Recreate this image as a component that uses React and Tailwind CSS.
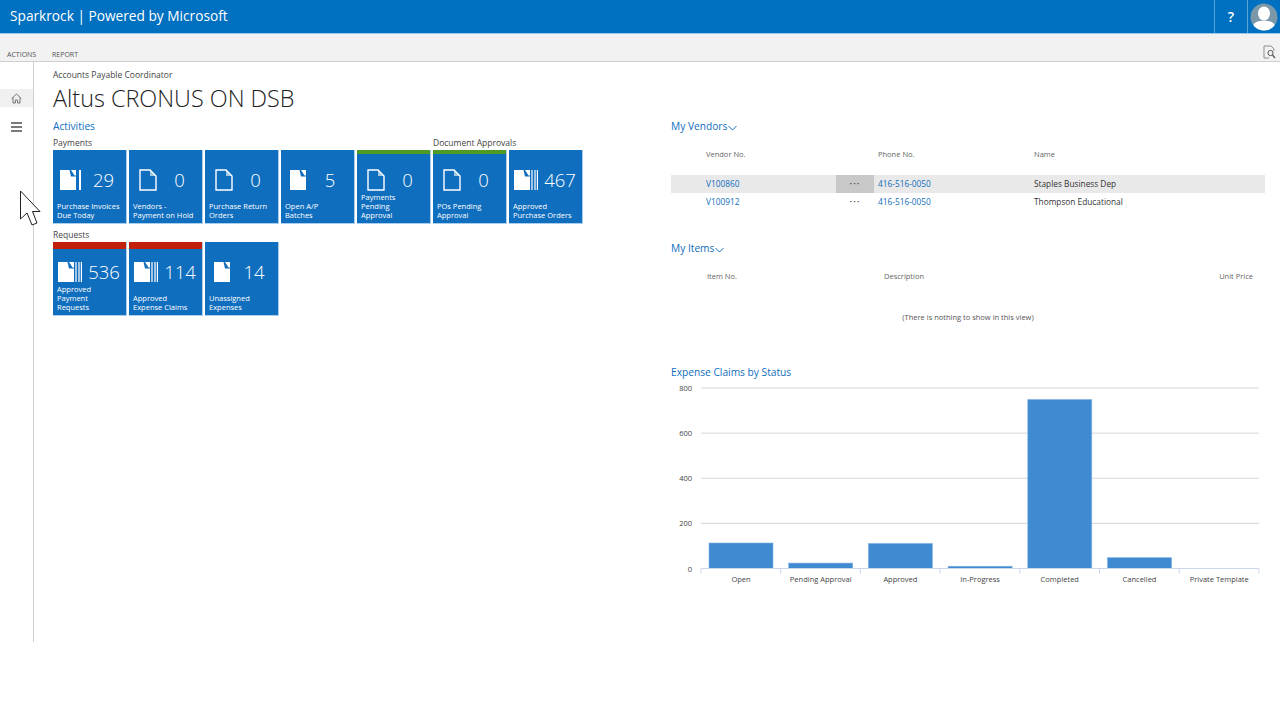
import React from 'react';

const font = { fontFamily: '"Open Sans", "Liberation Sans", sans-serif' };

const payments = [
  { label: ['Purchase Invoices', 'Due Today'], value: 29, bars: 1 },
  { label: ['Vendors -', 'Payment on Hold'], value: 0, bars: 0 },
  { label: ['Purchase Return', 'Orders'], value: 0, bars: 0 },
  { label: ['Open A/P', 'Batches'], value: 5, bars: 0, filled: true },
  { label: ['Payments', 'Pending', 'Approval'], value: 0, bars: 0, top: 'green' },
];
const approvals = [
  { label: ['POs Pending', 'Approval'], value: 0, bars: 0, top: 'green' },
  { label: ['Approved', 'Purchase Orders'], value: 467, bars: 3 },
];
const requests = [
  { label: ['Approved', 'Payment', 'Requests'], value: 536, bars: 3, top: 'red' },
  { label: ['Approved', 'Expense Claims'], value: 114, bars: 3, top: 'red' },
  { label: ['Unassigned', 'Expenses'], value: 14, bars: 0, filled: true },
];

const chartData = [
  { name: 'Open', value: 113 },
  { name: 'Pending Approval', value: 24 },
  { name: 'Approved', value: 111 },
  { name: 'In-Progress', value: 10 },
  { name: 'Completed', value: 749 },
  { name: 'Cancelled', value: 48 },
  { name: 'Private Template', value: 0 },
];

function OutlineDoc() {
  return (
    <svg width="18" height="22" viewBox="0 0 18 22" className="shrink-0 ml-[10px]">
      <path d="M1 1H11L17 7V21H1Z" fill="none" stroke="white" strokeWidth="1.4" />
      <path d="M11 1L17 7H11Z" fill="white" fillOpacity="0.6" />
    </svg>
  );
}

function FilledDoc({ bars }) {
  let width = 16;
  if (bars === 1) width = 21;
  if (bars === 3) width = 24;
  let margin = 'ml-[9px]';
  if (bars === 1) margin = 'ml-[7px]';
  if (bars === 3) margin = 'ml-[5px]';
  return (
    <svg width={width} height="22" viewBox={`0 0 ${width} 22`} className={`shrink-0 ${margin}`}>
      <path d="M0 1H9.5L11 7.5H16V21H0Z" fill="white" />
      <path d="M11 1H16V6.5H14.5Z" fill="white" />
      {bars === 1 && <rect x="19" y="1" width="2" height="20" fill="white" />}
      {bars === 3 && (
        <g fill="white">
          <rect x="17.4" y="1" width="1.2" height="20" />
          <rect x="20.4" y="1" width="1.2" height="20" />
          <rect x="22.8" y="1" width="1.2" height="20" />
        </g>
      )}
    </svg>
  );
}

function Tile({ tile }) {
  const solid = tile.bars > 0 || tile.filled;
  return (
    <div className="w-[74px] h-[74px] bg-[#106ebe] border-b border-r border-b-[#a9cdec] border-r-[#a9cdec] flex flex-col text-white">
      {tile.top === 'red' && <div className="h-[7px] bg-[#c0200c]" />}
      {tile.top === 'green' && <div className="h-[4px] bg-[#4f9a24]" />}
      <div className={`flex items-center ${tile.top === 'red' ? 'mt-[12px]' : tile.top === 'green' ? 'mt-[15px]' : 'mt-[19px]'}`}>
        {solid ? <FilledDoc bars={tile.bars} /> : <OutlineDoc />}
        <div className="flex-1 text-center text-[18.5px] leading-[22px] font-light">{tile.value}</div>
      </div>
      <div className="mt-auto pl-[4px] pb-[3px] text-[7.5px] leading-[9px] whitespace-nowrap">
        {tile.label.map((line) => (
          <div key={line}>{line}</div>
        ))}
      </div>
    </div>
  );
}

function Chevron() {
  return (
    <svg width="9" height="6" viewBox="0 0 9 6" className="ml-[1px] mt-[3px]">
      <path d="M0.5 1L4.5 5L8.5 1" fill="none" stroke="#106ebe" strokeWidth="1" />
    </svg>
  );
}

function VendorRow({ no, name, active }) {
  return (
    <div className={`flex h-[18px] items-center text-[8.3px] ${active ? 'bg-[#e9e9e9]' : ''}`}>
      <div className="w-[165px] pl-[35px] text-[#106ebe]">{no}</div>
      <div className={`w-[38px] h-full flex items-center justify-center text-[#333] tracking-[1px] text-[10px] ${active ? 'bg-[#c8c8c8]' : ''}`}>
        <span className="-mt-[1px]">···</span>
      </div>
      <div className="w-[160px] pl-[4px] text-[#106ebe]">416-516-0050</div>
      <div className="text-[#333]">{name}</div>
    </div>
  );
}

function Chart() {
  const x0 = 30;
  const pitch = 79.7;
  const base = 186.5;
  const scale = 180.5 / 800;
  return (
    <svg width="600" height="205" viewBox="0 0 600 205" className="block" style={font}>
      {[0, 200, 400, 600, 800].map((v) => {
        const y = base - v * scale;
        return (
          <g key={v}>
            {v > 0 && <line x1={x0} x2="588" y1={y} y2={y} stroke="#d3d6da" strokeWidth="1" />}
            <text x="21" y={y + 3} textAnchor="end" fontSize="7.5" fill="#444">{v}</text>
          </g>
        );
      })}
      {chartData.map((d, i) => {
        const h = d.value * scale;
        return (
          <g key={d.name}>
            <rect x={x0 + 8 + i * pitch} y={base - h} width="64" height={h} fill="#3f8ad0" stroke="#7fb2e3" strokeWidth="0.6" />
            <text x={x0 + 40 + i * pitch} y={200} textAnchor="middle" fontSize="7.5" fill="#444">{d.name}</text>
          </g>
        );
      })}
      <line x1={x0} x2="588" y1={base} y2={base} stroke="#ccd6eb" strokeWidth="1" />
      {Array.from({ length: 8 }).map((_, i) => (
        <line key={i} x1={x0 + i * pitch} x2={x0 + i * pitch} y1={base} y2={base + 5} stroke="#ccd6eb" strokeWidth="1" />
      ))}
    </svg>
  );
}

export default function App() {
  return (
    <div className="relative w-[1280px] h-[720px] overflow-hidden bg-white" style={font}>
      <header className="h-[34px] bg-[#0070c0] border-b border-b-[#9cc7e8] flex items-center text-white">
        <div className="pl-[10px] text-[13.7px] flex-1">Sparkrock | Powered by Microsoft</div>
        <div className="w-[33px] h-full border-l border-l-[#5ba4da] flex items-center justify-center text-[14px] font-semibold">?</div>
        <div className="w-[33px] h-full border-l border-l-[#5ba4da] flex items-center justify-center">
          <svg width="28" height="28" viewBox="0 0 28 28">
            <defs>
              <clipPath id="avatar"><circle cx="14" cy="14" r="13.5" /></clipPath>
            </defs>
            <circle cx="14" cy="14" r="13.5" fill="#7b98ab" />
            <g clipPath="url(#avatar)" fill="white">
              <ellipse cx="14" cy="10.5" rx="6" ry="7" />
              <ellipse cx="14" cy="23" rx="11" ry="5.5" />
            </g>
          </svg>
        </div>
      </header>

      <div className="h-[28px] bg-[#f2f2f2] border-b border-b-[#cfcfcf] flex items-end text-[7px] text-[#555] pb-[1px]">
        <div className="pl-[7px] w-[52px]">ACTIONS</div>
        <div>REPORT</div>
        <div className="ml-auto mr-[4px] mb-[1px]">
          <svg width="13" height="14" viewBox="0 0 13 14">
            <path d="M1 1H8L11 4V6 M1 1V13H6" fill="none" stroke="#8a8f86" strokeWidth="1" />
            <circle cx="7.5" cy="8" r="2.6" fill="none" stroke="#555" strokeWidth="1" />
            <path d="M9.5 10L12 13" stroke="#555" strokeWidth="1.2" />
          </svg>
        </div>
      </div>

      <div className="flex">
        <aside className="w-[34px] h-[580px] border-r border-r-[#d0d0d0] pt-[27px] shrink-0">
          <div className="h-[18px] bg-[#f0f0f0] flex items-center justify-center">
            <svg width="11" height="11" viewBox="0 0 11 11">
              <path d="M0.7 5.5L5.5 1L10.3 5.5 M2 4.5V10H4.4V7H6.6V10H9V4.5" fill="none" stroke="#666" strokeWidth="0.9" />
            </svg>
          </div>
          <div className="mt-[15px] flex flex-col items-center gap-[2px]">
            <div className="w-[11px] h-[2px] bg-[#7a7a7a]" />
            <div className="w-[11px] h-[2px] bg-[#7a7a7a]" />
            <div className="w-[11px] h-[2px] bg-[#7a7a7a]" />
          </div>
        </aside>

        <main className="flex-1 flex pl-[19px]">
          <section className="w-[618px] shrink-0">
            <div className="mt-[8px] text-[8.5px] leading-[10px] text-[#444]">Accounts Payable Coordinator</div>
            <h1 className="mt-[1px] text-[23.4px] leading-[34px] font-light text-[#222]">Altus CRONUS ON DSB</h1>
            <div className="mt-[4px] text-[10.2px] leading-[14px] text-[#106ebe]">Activities</div>
            <div className="flex gap-[2px] mt-[4px]">
              <div>
                <div className="text-[8.5px] leading-[12px] text-[#444]">Payments</div>
                <div className="flex gap-[2px] mt-[1px]">
                  {payments.map((t) => <Tile key={t.label.join()} tile={t} />)}
                </div>
              </div>
              <div>
                <div className="text-[8.5px] leading-[12px] text-[#444]">Document Approvals</div>
                <div className="flex gap-[2px] mt-[1px]">
                  {approvals.map((t) => <Tile key={t.label.join()} tile={t} />)}
                </div>
              </div>
            </div>
            <div className="mt-[5px] text-[8.5px] leading-[12px] text-[#444]">Requests</div>
            <div className="flex gap-[2px] mt-[1px]">
              {requests.map((t) => <Tile key={t.label.join()} tile={t} />)}
            </div>
          </section>

          <section className="w-[594px] pt-[57px]">
            <div className="flex items-center text-[10.2px] leading-[14px] text-[#106ebe]">My Vendors<Chevron /></div>
            <div className="flex mt-[16px] h-[12px] items-center text-[7.5px] text-[#666]">
              <div className="w-[207px] pl-[35px]">Vendor No.</div>
              <div className="w-[156px]">Phone No.</div>
              <div>Name</div>
            </div>
            <div className="mt-[14px]">
              <VendorRow no="V100860" name="Staples Business Dep" active />
              <VendorRow no="V100912" name="Thompson Educational" />
            </div>

            <div className="mt-[30px] flex items-center text-[10.2px] leading-[14px] text-[#106ebe]">My Items<Chevron /></div>
            <div className="flex mt-[16px] h-[12px] items-center text-[7.5px] text-[#666]">
              <div className="w-[213px] pl-[36px]">Item No.</div>
              <div className="flex-1">Description</div>
              <div className="pr-[12px]">Unit Price</div>
            </div>
            <div className="mt-[28px] h-[12px] text-center text-[7.5px] leading-[12px] text-[#555]">(There is nothing to show in this view)</div>

            <div className="mt-[42px] text-[10.2px] leading-[14px] text-[#106ebe]">Expense Claims by Status</div>
            <div className="mt-[3px]">
              <Chart />
            </div>
          </section>
        </main>
      </div>

      <svg width="22" height="36" viewBox="0 0 22 36" className="absolute left-[19px] top-[190px]">
        <path d="M1.5 1V29L8 23L13 35L18 33L13.5 21.5H21Z" fill="white" stroke="#222" strokeWidth="1" />
      </svg>
    </div>
  );
}
